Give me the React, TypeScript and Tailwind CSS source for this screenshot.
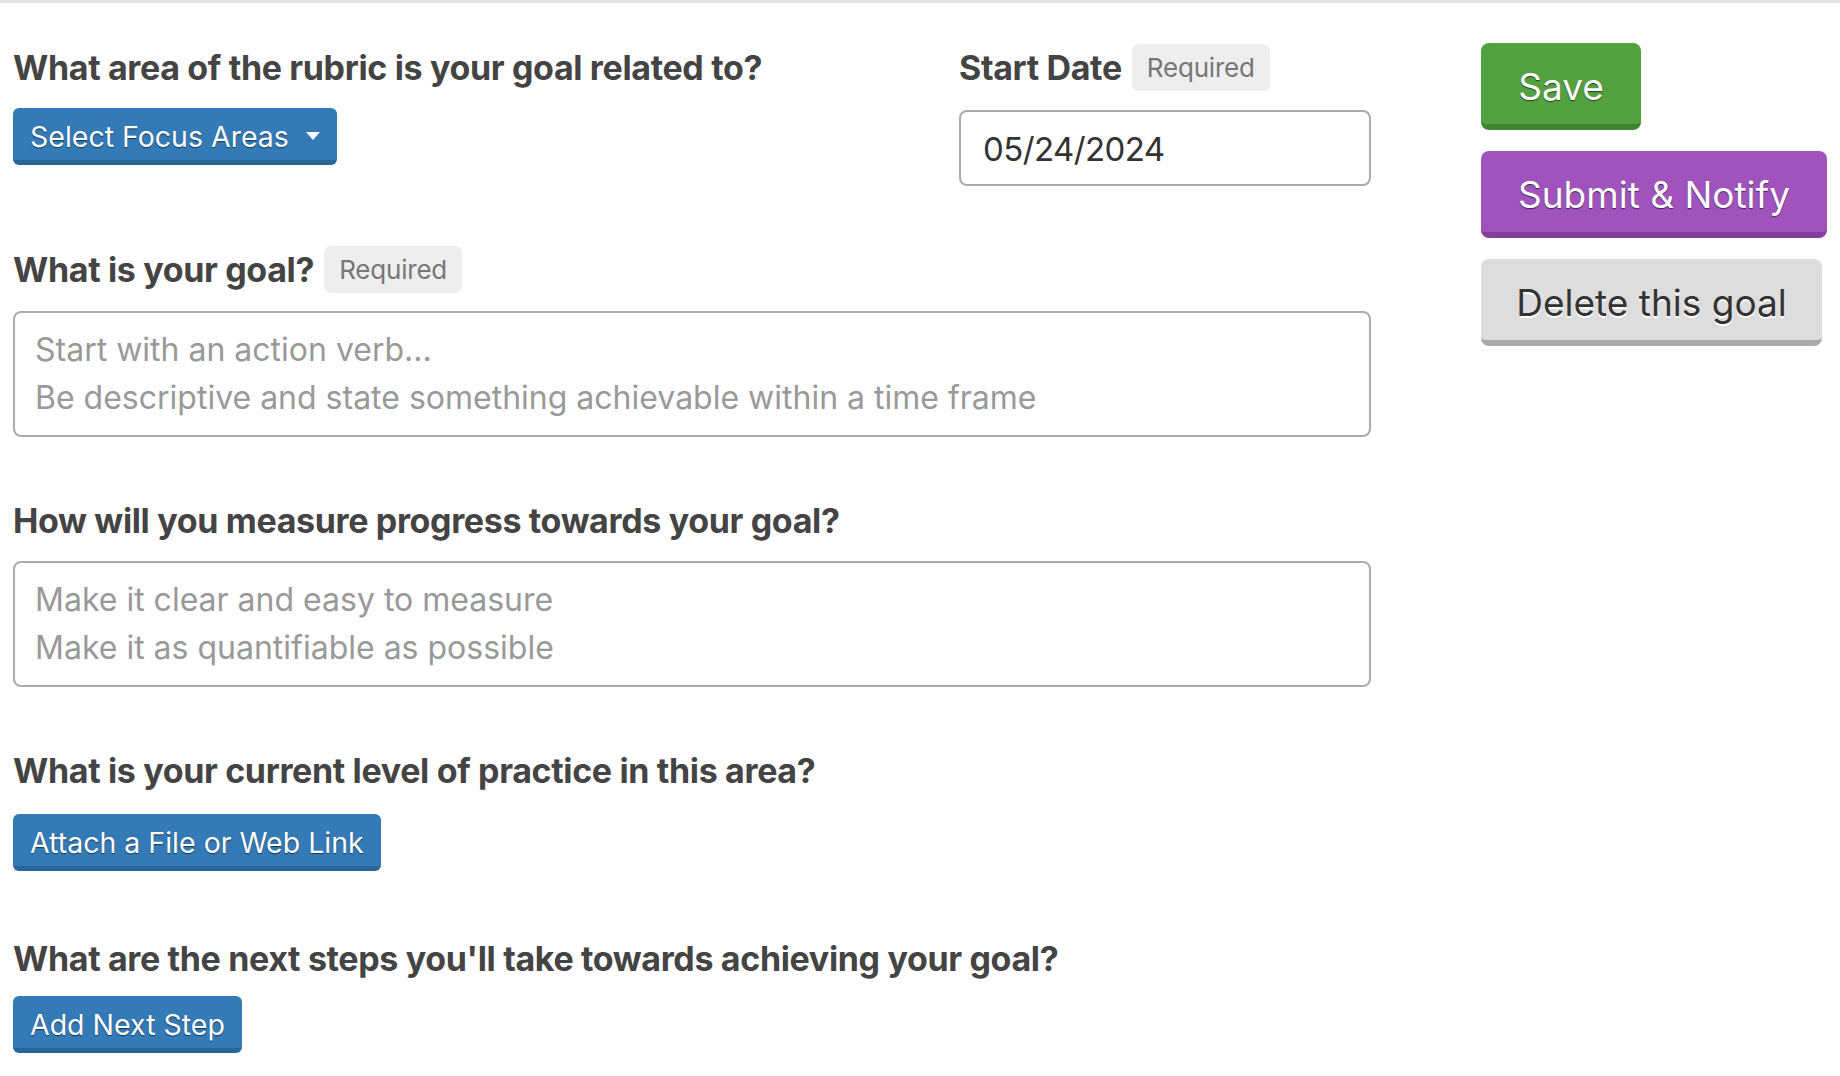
import { ReactNode } from "react";

function RequiredBadge() {
  return (
    <span className="ml-[10px] inline-flex h-[47px] items-center rounded-[7px] bg-[#eeeeee] px-[15px] text-[26px] font-normal tracking-[-0.2px] text-[#777777]">
      Required
    </span>
  );
}

function FieldLabel({ children, required }: { children: ReactNode; required?: boolean }) {
  return (
    <div className="flex h-[46px] items-center">
      <span className="text-[34px] font-bold tracking-[-0.35px] text-[#444444]">{children}</span>
      {required && <RequiredBadge />}
    </div>
  );
}

function BlueButton({ children }: { children: ReactNode }) {
  return (
    <button
      type="button"
      className="flex h-[57px] items-center whitespace-nowrap rounded-[6px] border-b-[5px] border-[#29679b] bg-[#337ab7] px-[17px] pt-[6px] text-[28.5px] text-white [text-shadow:0_1px_1px_rgba(0,0,0,0.55)]"
    >
      {children}
    </button>
  );
}

function BigButton({ children, className }: { children: ReactNode; className: string }) {
  return (
    <button
      type="button"
      className={`flex h-[87px] items-center justify-center whitespace-nowrap rounded-[8px] border-b-[6px] pt-[6px] text-[37px] ${className}`}
    >
      {children}
    </button>
  );
}

function PlaceholderBox({ lines }: { lines: string[] }) {
  return (
    <div className="h-[126px] w-[1358px] rounded-[8px] border-2 border-[#ababab] px-[20px] py-[13px] text-[32px] leading-[48px] text-[#999999]">
      {lines.map((l) => (
        <div key={l}>{l}</div>
      ))}
    </div>
  );
}

export default function App() {
  return (
    <div className="min-h-screen bg-white font-['Inter','Noto_Sans',sans-serif]">
      <div className="h-[3px] bg-[#e3e3e3]" />
      <div className="flex pl-[13px] pt-[41px]">
        <div className="w-[1358px]">
          <div className="flex">
            <div className="w-[946px]">
              <FieldLabel>What area of the rubric is your goal related to?</FieldLabel>
              <div className="mt-[18px] flex">
                <BlueButton>
                  Select Focus Areas
                  <span className="-mt-[2px] ml-[17px] h-0 w-0 border-x-[7px] border-t-[8px] border-x-transparent border-t-white" />
                </BlueButton>
              </div>
            </div>
            <div className="w-[412px]">
              <FieldLabel required>Start Date</FieldLabel>
              <div className="mt-[20px] flex h-[76px] items-center rounded-[8px] border-2 border-[#ababab] px-[22px] pt-[3px] text-[33px] tracking-[-0.6px] text-[#333333]">
                05/24/2024
              </div>
            </div>
          </div>

          <div className="mt-[60px]">
            <FieldLabel required>What is your goal?</FieldLabel>
            <div className="mt-[19px]">
              <PlaceholderBox
                lines={[
                  "Start with an action verb...",
                  "Be descriptive and state something achievable within a time frame",
                ]}
              />
            </div>
          </div>

          <div className="mt-[60px]">
            <FieldLabel>How will you measure progress towards your goal?</FieldLabel>
            <div className="mt-[18px]">
              <PlaceholderBox lines={["Make it clear and easy to measure", "Make it as quantifiable as possible"]} />
            </div>
          </div>

          <div className="mt-[60px]">
            <FieldLabel>What is your current level of practice in this area?</FieldLabel>
            <div className="mt-[21px] flex">
              <BlueButton>Attach a File or Web Link</BlueButton>
            </div>
          </div>

          <div className="mt-[64px]">
            <FieldLabel>What are the next steps you'll take towards achieving your goal?</FieldLabel>
            <div className="mt-[15px] flex">
              <BlueButton>Add Next Step</BlueButton>
            </div>
          </div>
        </div>

        <div className="-mt-[1px] ml-[110px] flex flex-col items-start gap-[21px]">
          <BigButton className="w-[160px] border-[#3f8432] bg-[#52a040] text-white [text-shadow:0_1px_1px_rgba(0,0,0,0.6)]">
            Save
          </BigButton>
          <BigButton className="w-[346px] border-[#82409a] bg-[#a053bd] text-white [text-shadow:0_1px_1px_rgba(0,0,0,0.6)]">
            Submit &amp; Notify
          </BigButton>
          <BigButton className="w-[341px] border-[#ababab] bg-[#dddddd] text-[#333333] [text-shadow:0_2px_0_#ffffff]">
            Delete this goal
          </BigButton>
        </div>
      </div>
    </div>
  );
}
